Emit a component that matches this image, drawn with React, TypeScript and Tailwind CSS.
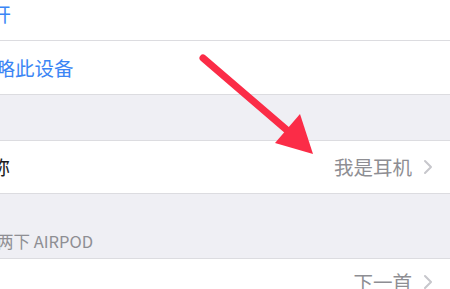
const font = { fontFamily: '"Noto Sans CJK SC", "Liberation Sans", sans-serif' };

function Chevron() {
  return (
    <svg width="10" height="16" viewBox="0 0 10 16" className="shrink-0">
      <path d="M2 2 L8 8 L2 14" fill="none" stroke="#c7c7cc" strokeWidth="2" strokeLinecap="round" strokeLinejoin="round" />
    </svg>
  );
}

export default function App() {
  return (
    <div className="relative w-[450px] h-[289px] overflow-hidden bg-[#efeff4]" style={font}>
      <div className="h-[41px] bg-white border-b border-[#dcdce0] flex items-center">
        <span className="ml-[-28px] -mt-[12px] text-[19.5px] text-[#3b86f5] leading-none">断开</span>
      </div>
      <div className="h-[54px] bg-white border-b border-[#dcdce0] flex items-center">
        <span className="ml-[-24px] text-[19.5px] text-[#3b86f5] leading-none">忽略此设备</span>
      </div>
      <div className="h-[45px]" />
      <div className="h-[54px] bg-white border-y border-[#dcdce0] flex items-center justify-between pr-[17px]">
        <span className="ml-[-29px] text-[19.5px] text-[#1c1c1e] leading-none">名称</span>
        <div className="flex items-center gap-[11px]">
          <span className="text-[19.5px] text-[#8e8e93] leading-none">我是耳机</span>
          <Chevron />
        </div>
      </div>
      <div className="h-[64px] flex items-end pb-[9px]">
        <span className="ml-[-36px] text-[16.5px] text-[#8e8e93] leading-none">轻点两下 AIRPOD</span>
      </div>
      <div className="h-[54px] bg-white border-t border-[#dcdce0] flex items-start justify-end pr-[17px] pt-[13px]">
        <div className="flex items-center gap-[11px]">
          <span className="text-[19.5px] text-[#8e8e93] leading-none">下一首</span>
          <Chevron />
        </div>
      </div>
      <svg className="absolute left-0 top-0" width="450" height="289" viewBox="0 0 450 289">
        <line x1="203" y1="58" x2="288" y2="131" stroke="#fb2c47" strokeWidth="7" strokeLinecap="round" />
        <polygon points="313,154 275,143 300,114" fill="#fb2c47" />
      </svg>
    </div>
  );
}
